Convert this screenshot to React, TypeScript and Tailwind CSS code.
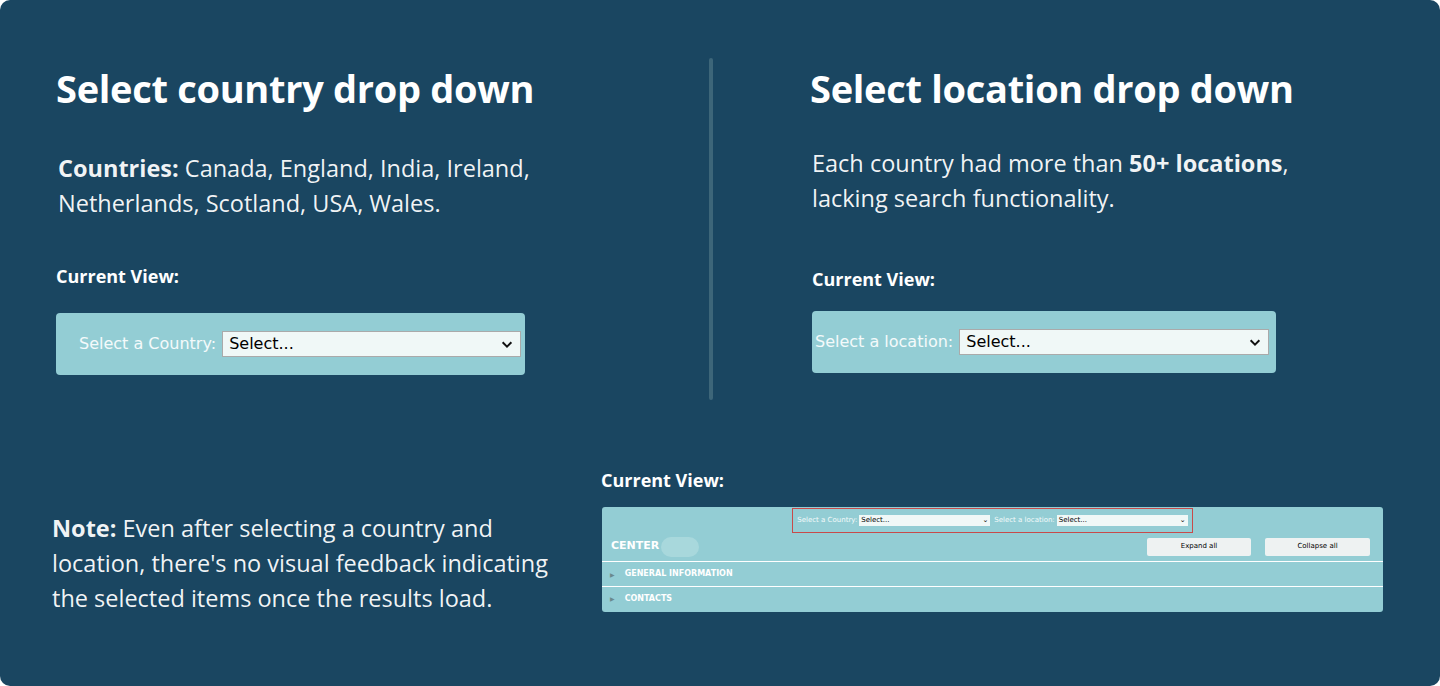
import React from "react";

const Chevron = ({ s = 14 }: { s?: number }) => (
  <svg width={s} height={s} viewBox="0 0 16 16" fill="none" stroke="#111" strokeWidth="2.2"><path d="M3 6l5 5 5-5" /></svg>
);

function BigSelect({ label, w }: { label: string; w: string }) {
  return (
    <div className={`bg-[#93cdd4] rounded-[4px] h-[62px] flex items-center ${w}`}>
      <span className="text-white/90 text-[16px] mr-[6px] whitespace-nowrap" style={{ fontFamily: "'DejaVu Sans', Tahoma, sans-serif" }}>{label}</span>
      <div className="flex-1 h-[26px] bg-[#f0f8f7] border border-[#aaa] flex items-center justify-between px-[6px]" style={{ fontFamily: "'DejaVu Sans', Tahoma, sans-serif" }}>
        <span className="text-[16px] text-black">Select...</span>
        <Chevron />
      </div>
    </div>
  );
}

export default function App() {
  const f = { fontFamily: "'Open Sans', 'Noto Sans', sans-serif" };
  const v = { fontFamily: "'DejaVu Sans', Tahoma, sans-serif" };
  return (
    <div className="w-[1440px] h-[686px] bg-white" style={f}>
      <div className="w-full h-full bg-[#1a4661] rounded-[10px] text-white relative">
        <div className="flex pt-[64px]">
          <div className="w-[709px] pl-[56px]">
            <h1 className="text-[38px] font-bold leading-[48px] tracking-[-0.3px]">Select country drop down</h1>
            <p className="text-[23.5px] leading-[35px] mt-[39px] pl-[2px] text-white/95"><b>Countries:</b> Canada, England, India, Ireland,<br />Netherlands, Scotland, USA, Wales.</p>
            <p className="text-[18px] font-bold mt-[42px]">Current View:</p>
            <div className="mt-[23px]">
              <BigSelect label="Select a Country:" w="w-[469px] pl-[23px] pr-[4px]" />
            </div>
          </div>
          <div className="w-[4px] h-[342px] bg-[#3d6679] rounded -mt-[6px]" />
          <div className="pl-[97px]">
            <h1 className="text-[38px] font-bold leading-[48px] tracking-[-0.3px]">Select location drop down</h1>
            <p className="text-[23.5px] leading-[35px] mt-[34px] pl-[2px] text-white/95">Each country had more than <b>50+ locations</b>,<br />lacking search functionality.</p>
            <p className="text-[18px] font-bold mt-[50px] pl-[2px]">Current View:</p>
            <div className="mt-[18px] pl-[2px]">
              <BigSelect label="Select a location:" w="w-[464px] pl-[3px] pr-[7px]" />
            </div>
          </div>
        </div>
        <div className="flex mt-[67px]">
          <div className="w-[600px] pl-[52px] pr-[50px] pt-[44px]">
            <p className="text-[23.5px] leading-[35px] text-white/95"><b>Note:</b> Even after selecting a country and location, there's no visual feedback indicating the selected items once the results load.</p>
          </div>
          <div>
            <p className="text-[18px] font-bold pl-[1px]">Current View:</p>
            <div className="mt-[13px] ml-[2px] w-[781px] h-[105px] bg-[#93cdd4] rounded-[3px] flex flex-col" style={v}>
              <div className="flex justify-center pt-[1px]">
                <div className="border border-[#c84a4a] flex items-center gap-[2px] px-[4px] h-[25px] text-[7px] text-white/90">
                  <span>Select a Country:</span>
                  <div className="w-[131px] h-[11px] bg-[#f0f8f7] text-black flex justify-between items-center px-[2px]"><span>Select...</span><span>⌄</span></div>
                  <span className="ml-[2px]">Select a location:</span>
                  <div className="w-[131px] h-[11px] bg-[#f0f8f7] text-black flex justify-between items-center px-[2px]"><span>Select...</span><span>⌄</span></div>
                </div>
              </div>
              <div className="flex items-center h-[29px] px-[9px] -mt-[1px]">
                <span className="text-[11px] font-bold text-white">CENTER</span>
                <span className="w-[38px] h-[20px] rounded-full bg-[#a8d8dc] ml-[2px]" />
                <div className="flex-1" />
                <button className="w-[104px] h-[18px] bg-[#eef2f2] rounded-[2px] text-[7px] text-black">Expand all</button>
                <button className="w-[105px] h-[18px] bg-[#eef2f2] rounded-[2px] text-[7px] text-black ml-[14px] mr-[4px]">Collapse all</button>
              </div>
              <div className="border-t border-white h-[25px] flex items-center px-[8px] text-[8px] font-bold text-white"><span className="text-[#6a8a8e] text-[6px] mr-[10px]">▶</span>GENERAL INFORMATION</div>
              <div className="border-t border-white h-[24px] flex items-center px-[8px] text-[8px] font-bold text-white"><span className="text-[#6a8a8e] text-[6px] mr-[10px]">▶</span>CONTACTS</div>
            </div>
          </div>
        </div>
      </div>
    </div>
  );
}
